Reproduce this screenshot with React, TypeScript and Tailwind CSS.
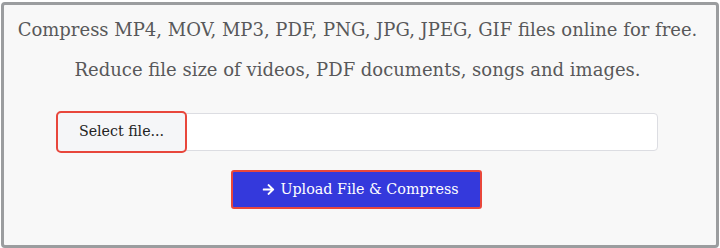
import { FaArrowRight } from "react-icons/fa";

export default function App() {
  return (
    <div className="h-[248px] w-[720px] bg-white pl-px pt-[2px] font-['DejaVu_Serif',serif]">
      <div className="flex h-[246px] w-[718px] flex-col items-center rounded-[4px] border-[3px] border-[#9b9d9f] bg-[#f8f8f8] pl-[53px] pr-[58px] pt-[13px]">
        <p className="whitespace-nowrap text-[18px] leading-[24px] text-[#58585a]">
          Compress MP4, MOV, MP3, PDF, PNG, JPG, JPEG, GIF files online for free.
        </p>
        <p className="mt-[16px] whitespace-nowrap text-[18px] leading-[24px] text-[#58585a]">
          Reduce file size of videos, PDF documents, songs and images.
        </p>
        <div className="mt-[31px] flex h-[38px] w-full rounded-[4px] border border-[#dcdde2] bg-white">
          <div className="-my-px flex h-[38px] w-[127px] items-center justify-center rounded-[3px] bg-[#f5f6f8] text-[14.2px] text-[#222] outline-[2px] outline-offset-[0px] outline-[#e8473c] [outline-style:solid]">
            Select file...
          </div>
        </div>
        <button className="mr-[3px] mt-[19px] flex h-[39px] w-[251px] items-center justify-center gap-[5px] rounded-[3px] border-2 border-[#e9473b] bg-[#3439dc] pl-[9px] text-[14.3px] text-white">
          <FaArrowRight className="h-[13px] w-[13px]" />
          <span>Upload File &amp; Compress</span>
        </button>
      </div>
    </div>
  );
}
